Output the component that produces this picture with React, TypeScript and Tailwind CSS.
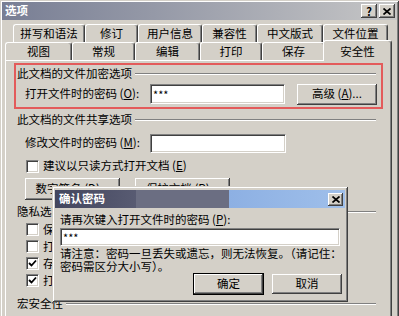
import React from 'react';

const raised =
  'bg-[#d4d0c8] shadow-[inset_-1px_-1px_0_#404040,inset_1px_1px_0_#ffffff,inset_-2px_-2px_0_#808080]';
const sunken =
  'bg-white border border-t-[#808080] border-l-[#808080] border-r-white border-b-white shadow-[inset_1px_1px_0_#404040,inset_-1px_-1px_0_#d4d0c8]';

function Groove({ className = '' }: { className?: string }) {
  return <div className={`h-0 border-t border-b border-t-[#808080] border-b-white ${className}`} />;
}

function Field({ className, value = '' }: { className: string; value?: string }) {
  return (
    <div className={`${sunken} ${className} flex items-center pl-[2px] text-[11px] leading-none`}>
      {value}
    </div>
  );
}

function Button({ className, children, def = false }: { className: string; children: React.ReactNode; def?: boolean }) {
  return (
    <div
      className={`${raised} ${className} flex items-center justify-center ${def ? 'outline outline-1 outline-black' : ''}`}
    >
      {children}
    </div>
  );
}

function Check({ checked = false }: { checked?: boolean }) {
  return (
    <div className={`${sunken} w-[13px] h-[13px] shrink-0 flex items-center justify-center`}>
      {checked && (
        <svg width="9" height="9" viewBox="0 0 9 9">
          <path d="M1 4 L3.5 6.5 L8 1.5" stroke="#000" strokeWidth="1.8" fill="none" />
        </svg>
      )}
    </div>
  );
}

function Tab({ label, className, selected = false }: { label: string; className: string; selected?: boolean }) {
  return (
    <div
      className={`${className} flex items-center justify-center pt-[1px] bg-[#d4d0c8] border-t border-l border-t-white border-l-white border-r border-r-[#404040] rounded-t-[3px] shadow-[inset_-1px_0_0_#808080] ${
        selected ? 'relative z-10 h-[21px] -mb-[1px] -ml-[2px]' : 'h-[18px]'
      }`}
    >
      {label}
    </div>
  );
}

function CloseGlyph() {
  return (
    <svg width="8" height="7" viewBox="0 0 8 7">
      <path d="M0.5 0.5 L7.5 6.5 M7.5 0.5 L0.5 6.5" stroke="#000" strokeWidth="1.7" />
    </svg>
  );
}

// privacy options sit behind the dialog, only the first glyph shows
function PrivacyRow({ label, checked = false }: { label: string; checked?: boolean }) {
  return (
    <div className="h-[17px] flex items-center gap-[4px] whitespace-nowrap">
      <Check checked={checked} />
      <span className="inline-block w-[12px] overflow-hidden">{label}</span>
    </div>
  );
}

export default function App() {
  return (
    <div className="relative w-[399px] h-[316px] overflow-hidden bg-[#d4d0c8] text-black text-[11.5px] font-['Noto_Sans_CJK_SC','Noto_Sans',sans-serif] p-[2px] shadow-[inset_1px_1px_0_#d4d0c8,inset_-1px_0_0_#404040,inset_2px_2px_0_#ffffff,inset_-2px_0_0_#808080]">
      {/* title bar */}
      <div className="h-[18px] flex items-center justify-between bg-gradient-to-r from-[#787e94] to-[#c6c6c6] pl-[3px] pr-[2px]">
        <span className="text-white font-bold">选项</span>
        <div className="flex gap-[2px]">
          <div className={`${raised} w-[16px] h-[14px] flex items-center justify-center font-bold text-[11px] leading-none`}>?</div>
          <div className={`${raised} w-[16px] h-[14px] flex items-center justify-center`}>
            <CloseGlyph />
          </div>
        </div>
      </div>

      {/* tabs */}
      <div className="mt-[4px] h-[18px] flex ml-[11px]">
        <Tab label="拼写和语法" className="w-[72px]" />
        <Tab label="修订" className="w-[53px]" />
        <Tab label="用户信息" className="w-[64px]" />
        <Tab label="兼容性" className="w-[55px]" />
        <Tab label="中文版式" className="w-[66px]" />
        <Tab label="文件位置" className="w-[65px]" />
      </div>
      <div className="h-[18px] flex items-end ml-[3px]">
        <Tab label="视图" className="w-[67px]" />
        <Tab label="常规" className="w-[63px]" />
        <Tab label="编辑" className="w-[65px]" />
        <Tab label="打印" className="w-[62px]" />
        <Tab label="保存" className="w-[63px]" />
        <Tab label="安全性" className="w-[69px]" selected />
      </div>

      {/* panel */}
      <div className="ml-[3px] w-[387px] h-[260px] flex flex-col border-t border-l border-t-white border-l-white border-r border-r-[#404040] shadow-[inset_-1px_0_0_#808080]">
        <div className="ml-[8px] mt-[2px] w-[369px] h-[46px] border-2 border-[#e35b5b]">
          <div className="h-[18px] flex items-center">
            <span className="ml-[1px]">此文档的文件加密选项</span>
            <Groove className="flex-1 ml-[3px] mr-[5px]" />
          </div>
          <div className="h-[22px] flex items-center">
            <span className="ml-[9px] w-[125px]">
              打开文件时的密码 (<u>O</u>):
            </span>
            <Field className="w-[135px] h-[20px]" value="***" />
            <Button className="ml-[12px] w-[80px] h-[21px]">
              高级 (<u>A</u>)...
            </Button>
          </div>
        </div>

        <div className="mt-[2px] h-[18px] flex items-center">
          <span className="ml-[11px]">此文档的文件共享选项</span>
          <Groove className="flex-1 ml-[3px] mr-[15px]" />
        </div>
        <div className="mt-[3px] h-[22px] flex items-center">
          <span className="ml-[19px] w-[125px]">
            修改文件时的密码 (<u>M</u>):
          </span>
          <Field className="w-[136px] h-[19px]" />
        </div>
        <div className="mt-[4px] h-[16px] flex items-center ml-[20px] gap-[4px]">
          <Check />
          <span>
            建议以只读方式打开文档 (<u>E</u>)
          </span>
        </div>
        <div className="mt-[4px] h-[22px] flex items-center">
          <Button className="ml-[19px] w-[95px] h-[22px]">
            数字签名 (<u>D</u>)...
          </Button>
          <Button className="ml-[15px] w-[95px] h-[22px]">
            保护文档 (<u>P</u>)...
          </Button>
        </div>

        <div className="mt-[4px] h-[16px] flex items-center">
          <span className="ml-[11px]">隐私选项</span>
          <Groove className="flex-1 ml-[3px] mr-[15px]" />
        </div>
        <div className="mt-[1px] flex flex-col ml-[20px]">
          <PrivacyRow label="保存时从文件属性中删除个人信息" />
          <PrivacyRow label="打印、保存或发送包含修订或批注的文件之前给出警告" />
          <PrivacyRow label="存储用于增强合并精确性的随机编号" checked />
          <PrivacyRow label="打开或保存时标记可见" checked />
        </div>
        <div className="mt-[7px] h-[16px] flex items-center">
          <span className="ml-[11px]">宏安全性</span>
          <Groove className="flex-1 ml-[3px] mr-[15px]" />
        </div>
      </div>

      {/* confirm dialog */}
      <div className="absolute left-[52px] top-[186px] w-[296px] h-[116px] bg-[#d4d0c8] p-[3px] flex flex-col shadow-[inset_1px_1px_0_#d4d0c8,inset_-1px_-1px_0_#404040,inset_2px_2px_0_#ffffff,inset_-2px_-2px_0_#808080]">
        <div className="h-[18px] mt-[1px] flex items-center justify-between pl-[4px] pr-[2px] bg-[linear-gradient(to_right,#43465e_0%,#585b72_28%,#6b6e82_28%,#6b6e82_60%,#8db0e3_60%,#9fbfea_100%)]">
          <span className="text-white font-bold">确认密码</span>
          <div className={`${raised} w-[15px] h-[13px] flex items-center justify-center`}>
            <CloseGlyph />
          </div>
        </div>
        <div className="mt-[4px] h-[16px] flex items-center ml-[5px]">
          请再次键入打开文件时的密码 (<u>P</u>):
        </div>
        <Field className="ml-[5px] w-[280px] h-[18px]" value="***" />
        <div className="ml-[5px] mt-[1px] leading-[13px] whitespace-nowrap">
          请注意：密码一旦丢失或遗忘，则无法恢复。（请记住：
          <br />
          密码需区分大小写）。
        </div>
        <div className="mt-[1px] flex justify-end gap-[9px] pr-[3px]">
          <Button def className="w-[69px] h-[20px]">
            确定
          </Button>
          <Button className="w-[70px] h-[20px]">取消</Button>
        </div>
      </div>
    </div>
  );
}
